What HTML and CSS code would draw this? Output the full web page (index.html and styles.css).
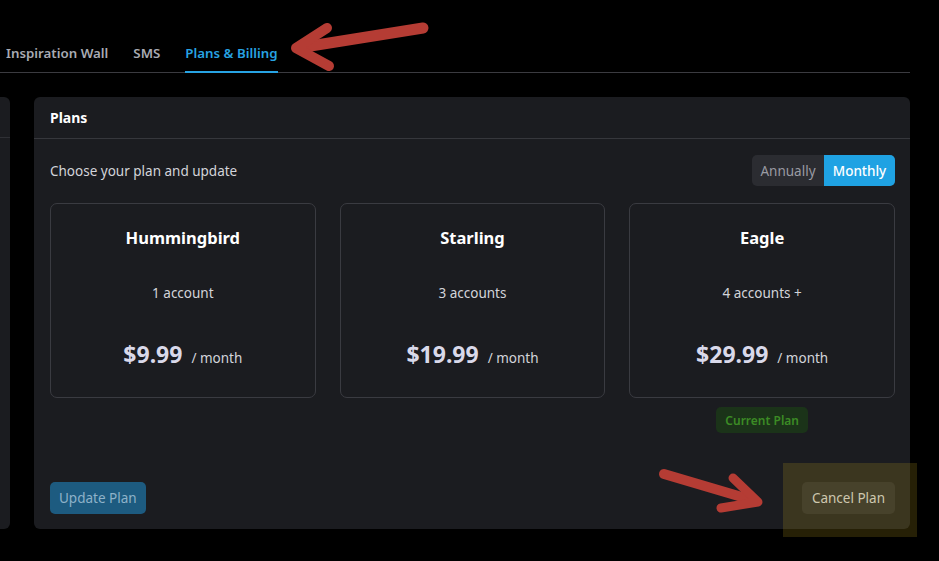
FILE: index.html
```html
<!DOCTYPE html>
<html lang="en">
<head>
<meta charset="utf-8">
<title>Plans &amp; Billing</title>
<link rel="stylesheet" href="styles.css">
</head>
<body>
<div class="page">
  <nav class="tabbar">
    <a class="tab">Inspiration Wall</a>
    <a class="tab">SMS</a>
    <a class="tab active">Plans &amp; Billing</a>
  </nav>
  <div class="content">
    <aside class="side-panel"><div class="side-head"></div></aside>
    <section class="panel">
      <header class="panel-head">Plans</header>
      <div class="panel-body">
        <div class="intro">
          <span class="intro-text">Choose your plan and update</span>
          <div class="toggle">
            <span class="toggle-opt">Annually</span>
            <span class="toggle-opt on">Monthly</span>
          </div>
        </div>
        <div class="plans">
          <div class="plan-col">
            <div class="plan-card">
              <div class="plan-name">Hummingbird</div>
              <div class="plan-accounts">1 account</div>
              <div class="plan-price"><span class="amount">$9.99</span><span class="per">/ month</span></div>
            </div>
          </div>
          <div class="plan-col">
            <div class="plan-card">
              <div class="plan-name">Starling</div>
              <div class="plan-accounts">3 accounts</div>
              <div class="plan-price"><span class="amount">$19.99</span><span class="per">/ month</span></div>
            </div>
          </div>
          <div class="plan-col">
            <div class="plan-card">
              <div class="plan-name">Eagle</div>
              <div class="plan-accounts">4 accounts +</div>
              <div class="plan-price"><span class="amount">$29.99</span><span class="per">/ month</span></div>
            </div>
            <span class="current-badge">Current Plan</span>
          </div>
        </div>
        <div class="actions">
          <button class="btn btn-update">Update Plan</button>
          <button class="btn btn-cancel">Cancel Plan</button>
        </div>
      </div>
    </section>
  </div>
  <div class="highlight"></div>
  <svg class="annotations" width="939" height="561" viewBox="0 0 939 561">
    <g fill="none" stroke="#b53c34" stroke-linecap="round" stroke-linejoin="round">
      <path d="M423 28 L298 48" stroke-width="11"/>
      <path d="M327 28 L296 48 L329 66" stroke-width="10"/>
      <path d="M664 474 L752 500" stroke-width="10"/>
      <path d="M733 478 L758 502 L721 508" stroke-width="9"/>
    </g>
  </svg>
</div>
</body>
</html>
```
FILE: styles.css
```css
* { box-sizing: border-box; }
html, body { margin: 0; padding: 0; background: #000; }
body {
  font-family: "Noto Sans", "Open Sans", "Liberation Sans", sans-serif;
  color: #d6d6dc;
  width: 939px;
  height: 561px;
  overflow: hidden;
}
.page { position: relative; width: 939px; height: 561px; }

.tabbar {
  width: 910px;
  display: flex;
  gap: 25px;
  padding: 43px 0 0 6px;
  border-bottom: 1px solid #3b3b40;
}
.tab {
  font-size: 13.3px;
  font-weight: 600;
  line-height: 20px;
  color: #a9abb3;
  padding-bottom: 8px;
  margin-bottom: -1px;
  border-bottom: 2px solid transparent;
}
.tab.active { color: #27a3e3; border-bottom-color: #27a3e3; }

.content {
  display: flex;
  gap: 24px;
  margin-top: 24px;
  width: 910px;
  height: 432px;
}
.side-panel {
  width: 10px;
  background: #1b1c20;
  border-radius: 0 6px 6px 0;
}
.side-head { height: 41px; border-bottom: 1px solid #2f3035; }
.panel {
  flex: 1;
  background: #1b1c20;
  border-radius: 6px;
  display: flex;
  flex-direction: column;
}
.panel-head {
  height: 42px;
  padding: 0 16px;
  display: flex;
  align-items: center;
  font-size: 14px;
  font-weight: 700;
  color: #fff;
  border-bottom: 1px solid #36373c;
}
.panel-body {
  flex: 1;
  padding: 16px 15px 15px 16px;
  display: flex;
  flex-direction: column;
}
.intro {
  display: flex;
  justify-content: space-between;
  align-items: center;
  height: 31px;
}
.intro-text { font-size: 13.5px; color: #d3d4da; }
.toggle {
  display: flex;
  height: 31px;
  border-radius: 5px;
  overflow: hidden;
  background: #2b2c31;
}
.toggle-opt {
  display: flex;
  align-items: center;
  justify-content: center;
  width: 72px;
  font-size: 13.5px;
  color: #9a9ba3;
}
.toggle-opt.on { width: 71px; background: #1fa2e3; color: #fff; font-weight: 500; }

.plans {
  display: grid;
  grid-template-columns: repeat(3, 1fr);
  gap: 24px;
  margin-top: 17px;
}
.plan-col { display: flex; flex-direction: column; align-items: center; }
.plan-card {
  width: 100%;
  height: 195px;
  border: 1px solid #3a3b41;
  border-radius: 7px;
  text-align: center;
  padding-top: 22px;
}
.plan-name { font-size: 16.5px; font-weight: 700; color: #fff; line-height: 24px; }
.plan-accounts { font-size: 13.5px; color: #d3d4da; line-height: 20px; margin-top: 33px; }
.plan-price {
  margin-top: 36px;
  display: flex;
  justify-content: center;
  align-items: baseline;
}
.amount { font-size: 23px; font-weight: 700; color: #d9d9ea; line-height: 30px; }
.per { font-size: 13.5px; color: #d3d4da; margin-left: 9px; }

.current-badge {
  margin-top: 9px;
  height: 26px;
  padding: 0 9px;
  display: flex;
  align-items: center;
  border-radius: 5px;
  background: #1b3319;
  color: #3c8b25;
  font-size: 12px;
  font-weight: 600;
}

.actions {
  margin-top: auto;
  display: flex;
  justify-content: space-between;
}
.btn {
  font-family: inherit;
  font-size: 13.5px;
  height: 32px;
  border: none;
  border-radius: 5px;
  padding: 0 9px;
}
.btn-update { background: #1d5b80; color: #8eb2c9; }
.btn-cancel { background: #2a2b2f; color: #d2d2d2; padding: 0 10px; }

.highlight {
  position: absolute;
  left: 783px;
  top: 463px;
  width: 134px;
  height: 74px;
  background: rgba(190, 160, 30, 0.2);
  pointer-events: none;
}
.annotations { position: absolute; left: 0; top: 0; pointer-events: none; }
```
